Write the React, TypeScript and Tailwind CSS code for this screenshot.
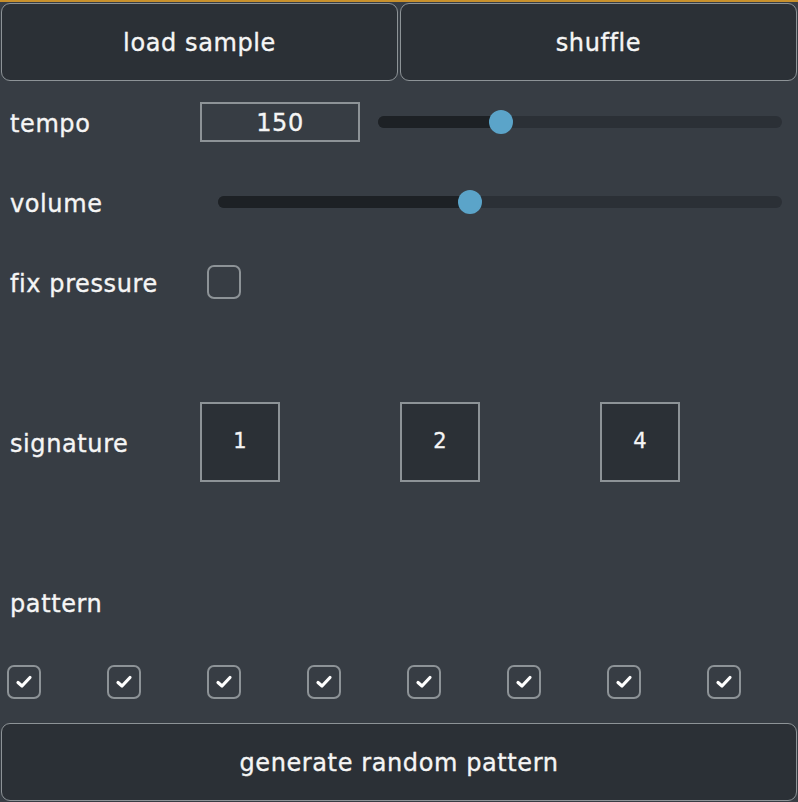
import React from "react";

const font = { fontFamily: '"DejaVu Sans", "Lucida Grande", sans-serif' };

function Slider({ pct }: { pct: number }) {
  return (
    <div className="relative flex-1 h-[12px] ml-[18px] mr-[16px] rounded-full bg-[#2b3036]">
      <div className="absolute left-0 top-0 h-full rounded-full bg-[#1d2125]" style={{ width: `${pct}%` }} />
      <div
        className="absolute top-1/2 w-[24px] h-[24px] -translate-x-1/2 -translate-y-1/2 rounded-full bg-[#5ba4c9]"
        style={{ left: `${pct}%` }}
      />
    </div>
  );
}

function Check({ checked }: { checked: boolean }) {
  return (
    <div className="w-[34px] h-[34px] rounded-[7px] border-2 border-[#8d9397] flex items-center justify-center">
      {checked && (
        <svg width="18" height="16" viewBox="0 0 18 16">
          <path d="M3 8.5 L7 12 L15 3.5" fill="none" stroke="#ffffff" strokeWidth="3.2" strokeLinecap="round" strokeLinejoin="round" />
        </svg>
      )}
    </div>
  );
}

const txt = "text-[24px] tracking-[0.6px] [word-spacing:0px] [-webkit-text-stroke:0.35px_#f5f5f5]";

export default function App() {
  return (
    <div className="w-[798px] h-[802px] bg-[#373d44] border-t-2 border-[#c8902c] text-[#f5f5f5] flex flex-col overflow-hidden" style={font}>
      <div className="h-[80px] flex shrink-0">
        <button className={`flex-1 m-px rounded-[9px] border border-[#8d9397] bg-[#2b3036] text-[#f5f5f5] pt-[2px] ${txt}`}>load sample</button>
        <button className={`flex-1 m-px rounded-[9px] border border-[#8d9397] bg-[#2b3036] text-[#f5f5f5] pt-[2px] ${txt}`}>shuffle</button>
      </div>
      <div className="h-[80px] flex items-center shrink-0">
        <div className={`w-[200px] shrink-0 pl-[10px] pt-[3px] ${txt}`}>tempo</div>
        <div className={`w-[160px] h-[40px] shrink-0 border-2 border-[#8d9397] flex items-center justify-center pt-[2px] ${txt}`}>150</div>
        <Slider pct={30.4} />
      </div>
      <div className="h-[80px] flex items-center shrink-0">
        <div className={`w-[200px] shrink-0 pl-[10px] pt-[3px] ${txt}`}>volume</div>
        <Slider pct={44.6} />
      </div>
      <div className="h-[80px] flex items-center shrink-0">
        <div className={`w-[200px] shrink-0 pl-[10px] pt-[3px] ${txt}`}>fix pressure</div>
        <div className="ml-[7px]">
          <Check checked={false} />
        </div>
      </div>
      <div className="h-[240px] flex items-center shrink-0">
        <div className={`w-[200px] shrink-0 pl-[10px] pt-[3px] ${txt}`}>signature</div>
        {["1", "2", "4"].map((n) => (
          <div key={n} className="w-[200px] shrink-0">
            <div className="w-[80px] h-[80px] border-2 border-[#8d9397] bg-[#2b3036] flex items-center justify-center text-[21px] [-webkit-text-stroke:0.3px_#f5f5f5]">{n}</div>
          </div>
        ))}
      </div>
      <div className="h-[80px] flex items-center shrink-0">
        <div className={`pl-[10px] pt-[3px] ${txt}`}>pattern</div>
      </div>
      <div className="h-[80px] flex items-center shrink-0">
        {Array.from({ length: 8 }).map((_, i) => (
          <div key={i} className="w-[100px] shrink-0 pl-[7px]">
            <Check checked={true} />
          </div>
        ))}
      </div>
      <div className="h-[80px] flex shrink-0">
        <button className={`flex-1 m-px rounded-[9px] border border-[#8d9397] bg-[#2b3036] text-[#f5f5f5] pt-[2px] ${txt}`}>generate random pattern</button>
      </div>
    </div>
  );
}
